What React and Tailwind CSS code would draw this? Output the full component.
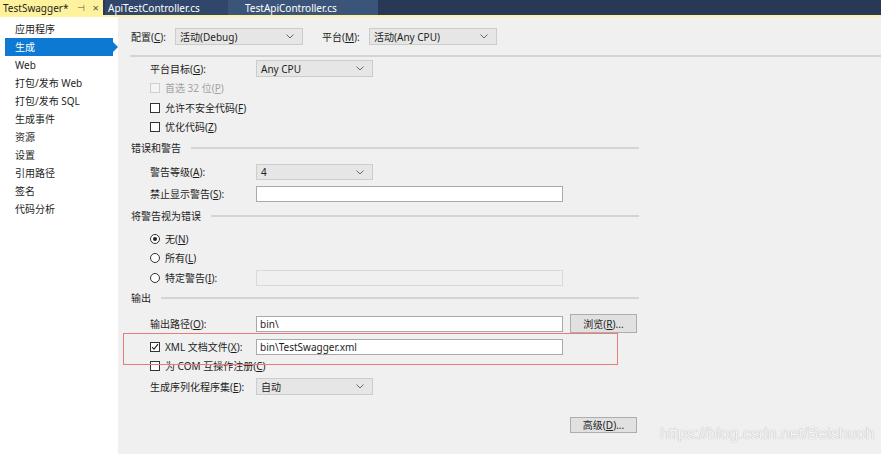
import React from "react";

const U = ({ children }) => <span className="underline underline-offset-1">{children}</span>;

const Chevron = () => (
  <svg width="8" height="5" viewBox="0 0 8 5" className="shrink-0">
    <path d="M0.5 0.5 L4 4 L7.5 0.5" fill="none" stroke="#666" strokeWidth="1" />
  </svg>
);

const Sel = ({ w, children }) => (
  <div className={`h-full ${w} border border-[#cccccc] bg-[#e6e6e6] flex items-center justify-between pl-[4px] pr-[8px] text-[#1e1e1e]`}>
    <span>{children}</span>
    <Chevron />
  </div>
);

const Input = ({ children, disabled }) => (
  <div
    className={
      disabled
        ? "h-[16px] w-[307px] border border-[#d9d9d9] bg-[#f0f0f0]"
        : "h-[16px] w-[307px] border border-[#a9a9a9] bg-white flex items-center pl-[3px] text-[#1e1e1e]"
    }
  >
    {children}
  </div>
);

const Check = ({ checked, disabled }) => (
  <div
    className={
      disabled
        ? "w-[10px] h-[10px] border border-[#cfcfcf] bg-[#f4f4f4] shrink-0"
        : "w-[10px] h-[10px] border border-[#333333] bg-white shrink-0 flex items-center justify-center"
    }
  >
    {checked && (
      <svg width="8" height="8" viewBox="0 0 8 8">
        <path d="M1 4 L3 6.2 L7 1.2" fill="none" stroke="#222" strokeWidth="1.1" />
      </svg>
    )}
  </div>
);

const Radio = ({ on }) => (
  <div className="w-[10px] h-[10px] rounded-full border border-[#333333] bg-white shrink-0 flex items-center justify-center">
    {on && <div className="w-[4px] h-[4px] rounded-full bg-[#222]" />}
  </div>
);

const Header = ({ children }) => (
  <div className="h-[16px] pl-[13px] pr-[242px] flex items-center text-[#1e1e1e]">
    <span>{children}</span>
    <div className="flex-1 h-[2px] bg-[#d4d4d4] ml-[10px]" />
  </div>
);

const Btn = ({ h, children }) => (
  <div className={`${h} w-[67px] border border-[#adadad] bg-[#e1e1e1] flex items-center justify-center text-[#1e1e1e]`}>
    {children}
  </div>
);

const sideItems = ["应用程序", "生成", "Web", "打包/发布 Web", "打包/发布 SQL", "生成事件", "资源", "设置", "引用路径", "签名", "代码分析"];

export default function App() {
  return (
    <div
      className="relative w-[881px] h-[454px] overflow-hidden flex flex-col text-[10px] leading-none"
      style={{ fontFamily: '"Noto Sans", "Noto Sans CJK SC", sans-serif' }}
    >
      {/* Tab bar */}
      <div className="h-[15px] bg-[#293955] flex items-stretch text-[10px] shrink-0">
        <div className="w-[103px] bg-[#fff29d] flex items-center pl-[3px] text-[#1e1e1e]">
          <span>TestSwagger*</span>
          <span className="ml-[9px] text-[9px] text-[#555]">⊣</span>
          <span className="ml-[7px] text-[11px] text-[#555]">×</span>
        </div>
        <div className="w-[2px]" />
        <div className="w-[123px] bg-[#30466a] flex items-center pl-[3px] text-white">ApiTestController.cs</div>
        <div className="w-[150px] bg-[#3b5479] flex items-center pl-[17px] text-white">TestApiController.cs</div>
      </div>
      <div className="h-[2px] bg-[#fff29d] shrink-0" />

      <div className="flex-1 flex">
        {/* Sidebar */}
        <div className="w-[118px] bg-white pt-[3px] flex flex-col">
          {sideItems.map((t, i) =>
            i === 1 ? (
              <div key={t} className="relative h-[18px] ml-[5px] w-[108px] bg-[#0e79d2] text-white flex items-center pl-[10px]">
                {t}
                <div className="absolute right-[-5px] top-[4px] w-0 h-0 border-y-[5px] border-y-transparent border-l-[5px] border-l-[#0e79d2]" />
              </div>
            ) : (
              <div key={t} className="h-[18px] flex items-center pl-[15px] text-[#1e1e1e]">
                {t}
              </div>
            )
          )}
        </div>

        {/* Content */}
        <div className="flex-1 bg-[#f0f0f0] flex flex-col text-[#1e1e1e]">
          <div className="mt-[11px] h-[17px] pl-[13px] flex items-center">
            <span className="w-[44px]">配置(<U>C</U>):</span>
            <Sel w="w-[128px]">活动(Debug)</Sel>
            <span className="ml-[19px] w-[47px]">平台(<U>M</U>):</span>
            <Sel w="w-[128px]">活动(Any CPU)</Sel>
          </div>
          <div className="mt-[10px] ml-[12px] h-[2px] bg-[#d4d4d4]" />

          <div className="mt-[3px] h-[17px] pl-[32px] flex items-center">
            <span className="w-[106px]">平台目标(<U>G</U>):</span>
            <Sel w="w-[117px]">Any CPU</Sel>
          </div>
          <div className="mt-[1px] h-[20px] pl-[32px] flex items-center gap-[5px] text-[#a2a2a2]">
            <Check disabled />
            <span>首选 32 位(<U>P</U>)</span>
          </div>
          <div className="h-[19px] pl-[32px] flex items-center gap-[5px]">
            <Check />
            <span>允许不安全代码(<U>F</U>)</span>
          </div>
          <div className="h-[20px] pl-[32px] flex items-center gap-[5px]">
            <Check />
            <span>优化代码(<U>Z</U>)</span>
          </div>

          <div className="mt-[3px]">
            <Header>错误和警告</Header>
          </div>
          <div className="mt-[8px] h-[16px] pl-[32px] flex items-center">
            <span className="w-[106px]">警告等级(<U>A</U>):</span>
            <Sel w="w-[117px]">4</Sel>
          </div>
          <div className="mt-[6px] h-[16px] pl-[32px] flex items-center">
            <span className="w-[106px]">禁止显示警告(<U>S</U>):</span>
            <Input />
          </div>

          <div className="mt-[6px]">
            <Header>将警告视为错误</Header>
          </div>
          <div className="mt-[5px] h-[19px] pl-[32px] flex items-center gap-[5px]">
            <Radio on />
            <span>无(<U>N</U>)</span>
          </div>
          <div className="h-[19px] pl-[32px] flex items-center gap-[5px]">
            <Radio />
            <span>所有(<U>L</U>)</span>
          </div>
          <div className="h-[22px] pl-[32px] flex items-center">
            <div className="w-[106px] flex items-center gap-[5px]">
              <Radio />
              <span>特定警告(<U>I</U>):</span>
            </div>
            <Input disabled />
          </div>

          <div className="mt-[1px]">
            <Header>输出</Header>
          </div>
          <div className="mt-[8px] h-[19px] pl-[32px] flex items-center">
            <span className="w-[106px]">输出路径(<U>O</U>):</span>
            <Input>bin\</Input>
            <div className="ml-[7px] h-full">
              <Btn h="h-[19px]">浏览(<U>R</U>)...</Btn>
            </div>
          </div>
          <div className="mt-[5px] h-[18px] pl-[32px] flex items-center">
            <div className="w-[106px] flex items-center gap-[5px]">
              <Check checked />
              <span>XML 文档文件(<U>X</U>):</span>
            </div>
            <Input>bin\TestSwagger.xml</Input>
          </div>
          <div className="mt-[1px] h-[18px] pl-[32px] flex items-center gap-[5px]">
            <Check />
            <span>为 COM 互操作注册(<U>C</U>)</span>
          </div>
          <div className="mt-[3px] h-[17px] pl-[32px] flex items-center">
            <span className="w-[106px]">生成序列化程序集(<U>E</U>):</span>
            <Sel w="w-[117px]">自动</Sel>
          </div>
          <div className="mt-[22px] h-[16px] pl-[452px] flex items-center">
            <Btn h="h-[16px]">高级(<U>D</U>)...</Btn>
          </div>
        </div>
      </div>

      {/* Red highlight box */}
      <div className="absolute left-[123px] top-[333px] w-[495px] h-[32px] border border-[#ea7b7b]" />

      {/* Watermark */}
      <div
        className="absolute left-[660px] top-[426px] text-[16px] leading-none text-[#f7f7f7] [text-shadow:0_0_1px_#9a9a9a]"
        style={{ fontFamily: '"Liberation Sans", Arial, sans-serif' }}
      >
        https://blog.csdn.net/Beishuoh
      </div>
    </div>
  );
}
